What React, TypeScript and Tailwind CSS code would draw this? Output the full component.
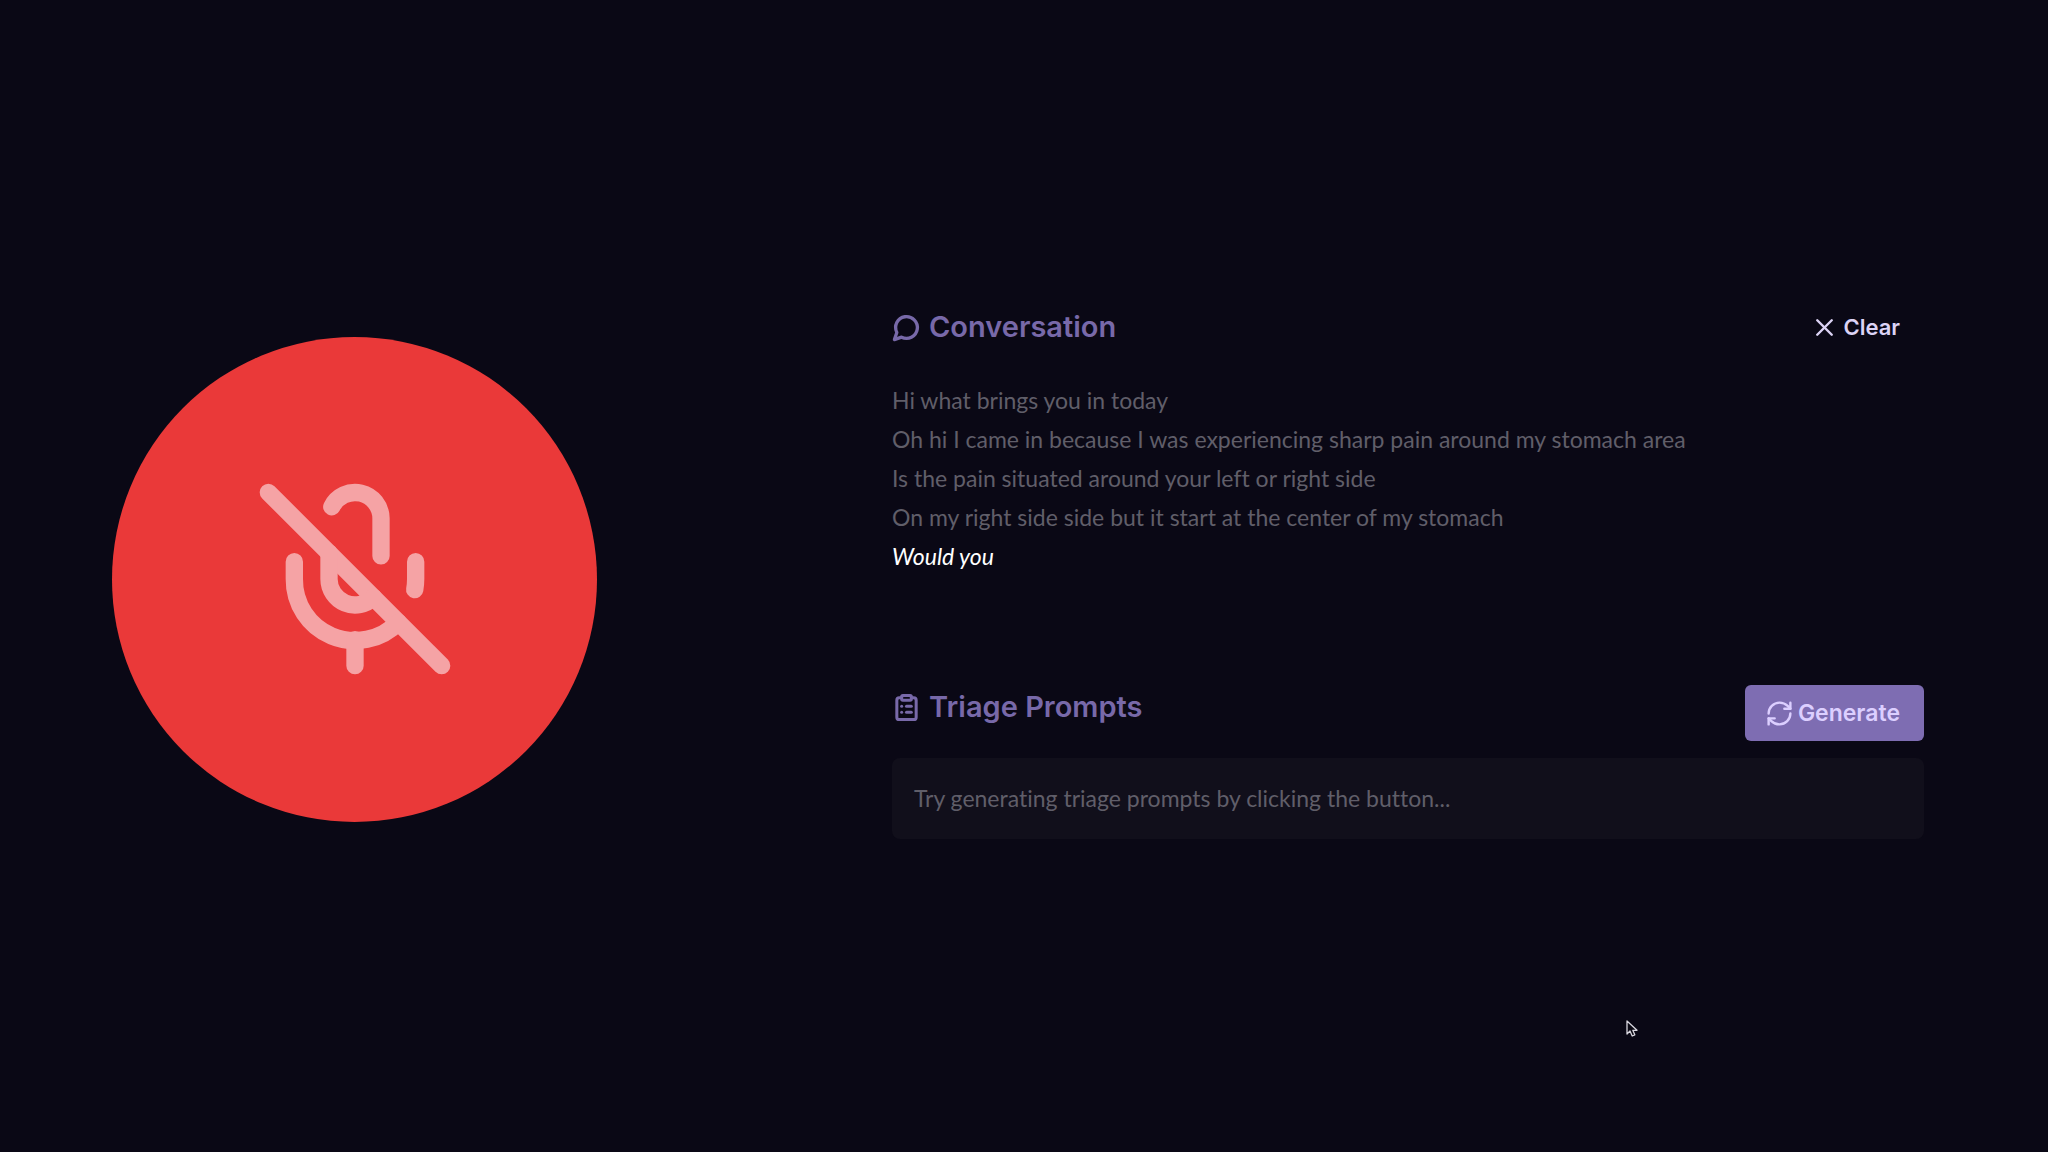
import React, { useState } from 'react';
import { ClipboardList, RefreshCw, X } from 'lucide-react';

const initialTranscript = [
  'Hi what brings you in today',
  'Oh hi I came in because I was experiencing sharp pain around my stomach area',
  'Is the pain situated around your left or right side',
  'On my right side side but it start at the center of my stomach',
];

const MicOffIcon = ({ className }: { className?: string }) => (
  <svg
    viewBox="0 0 24 24"
    fill="none"
    stroke="currentColor"
    strokeWidth="2"
    strokeLinecap="round"
    strokeLinejoin="round"
    aria-hidden="true"
    className={className}
  >
    <line x1="2" y1="2" x2="22" y2="22" />
    <path d="M18.89 13.23A7.12 7.12 0 0 0 19 12v-2" />
    <path d="M5 10v2a7 7 0 0 0 12 5" />
    <path d="M15 9.34V5a3 3 0 0 0-5.68-1.33" />
    <path d="M9 9v3a3 3 0 0 0 5.12 2.12" />
    <line x1="12" y1="19" x2="12" y2="22" />
  </svg>
);

const ChatIcon = ({ className }: { className?: string }) => (
  <svg
    viewBox="0 0 24 24"
    fill="none"
    stroke="currentColor"
    strokeWidth="2.75"
    strokeLinecap="round"
    strokeLinejoin="round"
    aria-hidden="true"
    className={className}
  >
    <path d="M7.9 20A9 9 0 1 0 4 16.1L2 22Z" />
  </svg>
);

const CursorIcon = ({ className }: { className?: string }) => (
  <svg viewBox="0 0 12 18" aria-hidden="true" className={className}>
    <path
      d="M1 1v13l3-3 2.2 5 2.6-1.2L6.8 10.3H11z"
      fill="#0b0914"
      stroke="#d8d6de"
      strokeWidth="1.3"
      strokeLinejoin="round"
    />
  </svg>
);

export default function App() {
  const [transcript, setTranscript] = useState(initialTranscript);
  const [partial, setPartial] = useState('Would you');
  const [isRecording, setIsRecording] = useState(true);

  const handleClear = () => {
    setTranscript([]);
    setPartial('');
  };

  return (
    <div className="relative min-h-screen flex items-center pt-1.5 bg-[#0a0815] font-['Lato',sans-serif] [font-variant-ligatures:none]">
      <main className="w-full grid grid-cols-[485px_1fr] items-center gap-[295px] pl-28 pr-31">
        <button
          type="button"
          aria-label="Stop recording"
          aria-pressed={isRecording}
          onClick={() => setIsRecording(!isRecording)}
          className="aspect-square w-full rounded-full bg-[#ea3939] text-[#f5a3a5] flex items-center justify-center"
        >
          <MicOffIcon className="size-52" />
        </button>

        <div className="flex flex-col pb-5">
          <section>
            <div className="flex items-center justify-between">
              <h2 className="flex items-center gap-2 font-['Inter',sans-serif] text-[29px] leading-9 font-semibold text-[#7869a9]">
                <ChatIcon className="size-[29px]" />
                Conversation
              </h2>
              <button
                type="button"
                onClick={handleClear}
                className="flex items-center gap-1 h-14 pl-5 pr-6 rounded-md font-['Inter',sans-serif] text-[22px] font-semibold text-[#dcd3f5]"
              >
                <X className="size-[29px]" strokeWidth={2} />
                Clear
              </button>
            </div>
            <div className="mt-[26px] text-[23px] leading-[39px] text-[#605e69]">
              {transcript.map((line) => (
                <p key={line}>{line}</p>
              ))}
              <p className="italic text-white">{partial}</p>
            </div>
          </section>

          <section className="mt-[109px]">
            <div className="flex items-start justify-between">
              <h2 className="flex items-center gap-2 pt-1 font-['Inter',sans-serif] text-[29px] leading-9 font-semibold text-[#7869a9]">
                <ClipboardList className="size-[29px]" strokeWidth={2.5} />
                Triage Prompts
              </h2>
              <button
                type="button"
                className="flex items-center gap-1 h-14 pl-5 pr-6 rounded-md bg-[#7e6db2] font-['Inter',sans-serif] text-[23px] font-semibold text-[#dccfff]"
              >
                <RefreshCw className="size-[29px]" strokeWidth={2} />
                Generate
              </button>
            </div>
            <p className="mt-[17px] px-[22px] py-[21px] rounded-lg bg-[#110f1b] text-[23px] leading-[39px] text-[#605e69]">
              Try generating triage prompts by clicking the button...
            </p>
          </section>
        </div>
      </main>

      <CursorIcon className="absolute left-[79.4%] top-[88.5%] w-3 h-4.5" />
    </div>
  );
}
